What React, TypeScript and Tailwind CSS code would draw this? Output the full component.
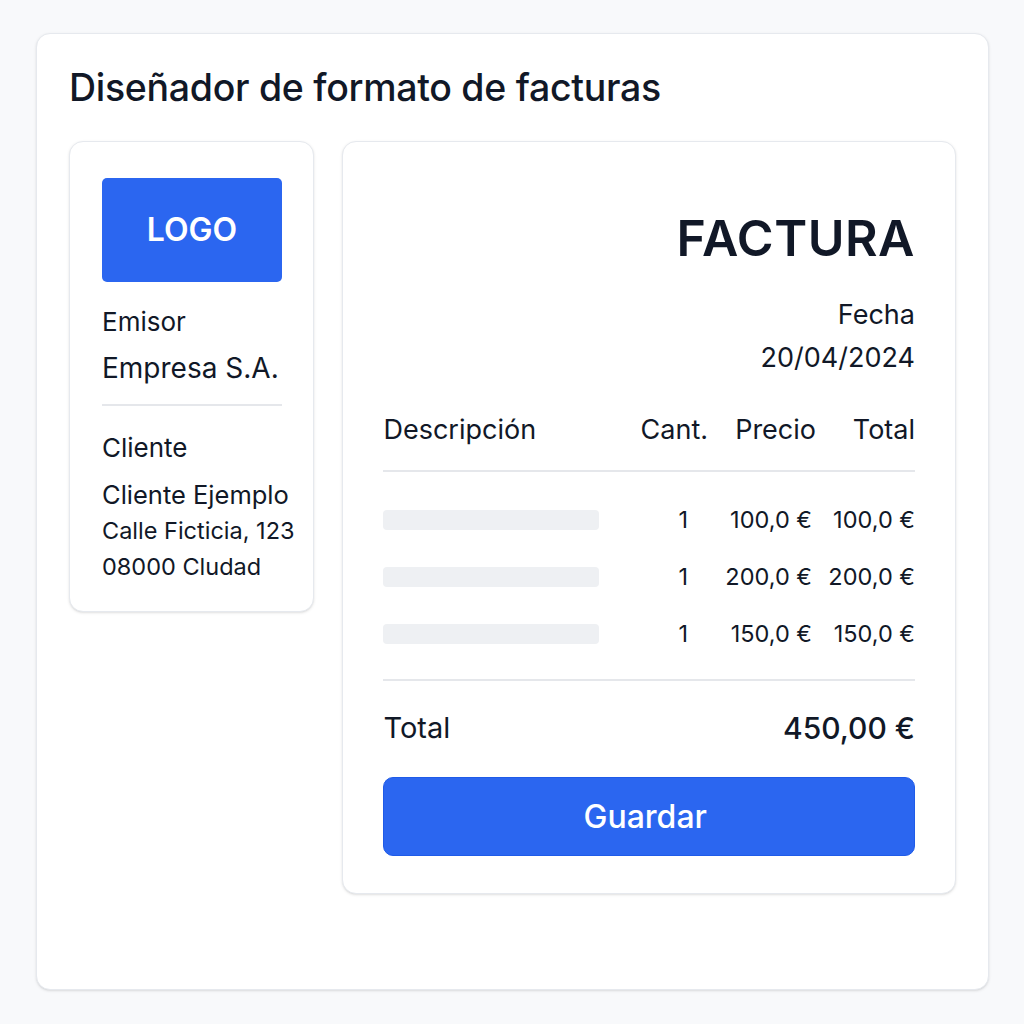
import React from "react";

const items = [
  { qty: 1, price: "100,0 €", total: "100,0 €" },
  { qty: 1, price: "200,0 €", total: "200,0 €" },
  { qty: 1, price: "150,0 €", total: "150,0 €" },
];

export default function App() {
  return (
    <div
      className="min-h-screen w-full bg-[#f8f9fb] pt-[33px] pl-[36px]"
      style={{ fontFamily: "Inter, 'Noto Sans', sans-serif" }}
    >
      <div className="w-[953px] h-[957px] bg-white rounded-[14px] border border-[#e6e9ee] shadow-sm px-[32px] pt-[34px]">
        <h1 className="text-[37.5px] leading-[40px] font-medium text-[#111827] tracking-[-0.3px] whitespace-nowrap">
          Diseñador de formato de facturas
        </h1>

        <div className="flex items-start gap-[28px] mt-[33px]">
          {/* Left card */}
          <div className="w-[246px] h-[471px] bg-white rounded-[14px] border border-[#e6e9ee] shadow-sm pl-[32px] pt-[36px]">
            <div className="w-[180px] h-[104px] bg-[#2b66f0] rounded-[5px] flex items-center justify-center text-white text-[32px] font-semibold">
              LOGO
            </div>
            <div className="w-[180px] text-[#111827]">
              <div className="text-[26px] leading-[30px] mt-[25px]">Emisor</div>
              <div className="text-[28px] leading-[32px] mt-[15px] whitespace-nowrap">Empresa S.A.</div>
              <div className="h-[2px] bg-[#e5e7eb] mt-[20px]" />
              <div className="text-[26px] leading-[30px] mt-[27px]">Cliente</div>
              <div className="text-[25.5px] leading-[36px] mt-[14px] whitespace-nowrap">Cliente Ejemplo</div>
              <div className="text-[23.5px] leading-[36px] whitespace-nowrap">Calle Ficticia, 123</div>
              <div className="text-[23.5px] leading-[36px] whitespace-nowrap">08000 Cludad</div>
            </div>
          </div>

          {/* Invoice card */}
          <div className="w-[615px] h-[753px] bg-white rounded-[14px] border border-[#e6e9ee] shadow-sm px-[40px] pt-[64px]">
            <div className="text-right text-[50px] leading-[64px] font-semibold text-[#111827] tracking-[0.5px]">
              FACTURA
            </div>
            <div className="text-right text-[27px] leading-[30px] text-[#111827] mt-[30px]">Fecha</div>
            <div className="text-right text-[27px] leading-[34px] text-[#111827] mt-[11px]">20/04/2024</div>

            <div className="grid grid-cols-[1fr_90px_108px_99px] text-[27px] leading-[30px] text-[#111827] mt-[40px] pb-[25px] border-b-2 border-[#e5e7eb]">
              <div>Descripción</div>
              <div className="text-right">Cant.</div>
              <div className="text-right">Precio</div>
              <div className="text-right">Total</div>
            </div>

            <div className="pt-[33px] pb-[30px] border-b-2 border-[#e5e7eb] flex flex-col gap-[27px]">
              {items.map((it, i) => (
                <div key={i} className="grid grid-cols-[1fr_90px_108px_99px] items-center text-[23.5px] leading-[30px] text-[#111827]">
                  <div className="h-[20px] w-[216px] bg-[#eef0f3] rounded-[4px]" />
                  <div className="text-right pr-[20px]">{it.qty}</div>
                  <div className="text-right pr-[4px] whitespace-nowrap">{it.price}</div>
                  <div className="text-right whitespace-nowrap">{it.total}</div>
                </div>
              ))}
            </div>

            <div className="flex justify-between items-center mt-[29px] text-[#111827]">
              <span className="text-[29px] leading-[36px]">Total</span>
              <span className="text-[30px] leading-[36px] font-medium">450,00 €</span>
            </div>

            <button className="w-full h-[79px] mt-[31px] pr-[8px] bg-[#2b66f0] rounded-[10px] border border-[#1f5be8] text-white text-[32px] font-medium">
              Guardar
            </button>
          </div>
        </div>
      </div>
    </div>
  );
}
